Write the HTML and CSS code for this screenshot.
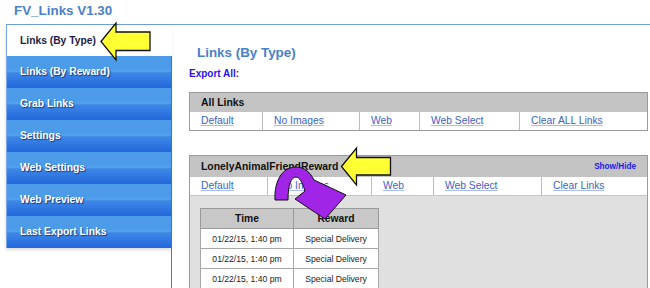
FILE: index.html
```html
<!DOCTYPE html>
<html lang="en">
<head>
    <meta charset="UTF-8">
    <meta name="viewport" content="width=device-width, initial-scale=1.0">
    <title>FV_Links V1.30</title>
    <link rel="stylesheet" href="styles.css">
</head>
<body>
    <div class="app-title">FV_Links V1.30</div>

    <div class="frame">
        <div class="side">
            <ul class="menu">
                <li class="active">Links (By Type)</li>
                <li>Links (By Reward)</li>
                <li>Grab Links</li>
                <li>Settings</li>
                <li>Web Settings</li>
                <li>Web Preview</li>
                <li>Last Export Links</li>
            </ul>
        </div>

        <div class="content">
            <h2>Links (By Type)</h2>
            <div class="export">Export All:</div>

            <div class="box">
                <div class="box-head">All Links</div>
                <div class="links all-cols">
                    <div class="cell"><a href="#">Default</a></div>
                    <div class="cell"><a href="#">No Images</a></div>
                    <div class="cell"><a href="#">Web</a></div>
                    <div class="cell"><a href="#">Web Select</a></div>
                    <div class="cell"><a href="#">Clear ALL Links</a></div>
                </div>
            </div>

            <div class="box reward-box">
                <div class="box-head">
                    <span>LonelyAnimalFriendReward</span>
                    <a href="#" class="toggle">Show/Hide</a>
                </div>
                <div class="links reward-cols">
                    <div class="cell"><a href="#">Default</a></div>
                    <div class="cell"><a href="#">No Images</a></div>
                    <div class="cell"><a href="#">Web</a></div>
                    <div class="cell"><a href="#">Web Select</a></div>
                    <div class="cell"><a href="#">Clear Links</a></div>
                </div>
                <div class="box-body">
                    <table class="log">
                        <thead>
                            <tr>
                                <th class="col-time">Time</th>
                                <th>Reward</th>
                            </tr>
                        </thead>
                        <tbody>
                            <tr><td>01/22/15, 1:40 pm</td><td>Special Delivery</td></tr>
                            <tr><td>01/22/15, 1:40 pm</td><td>Special Delivery</td></tr>
                            <tr><td>01/22/15, 1:40 pm</td><td>Special Delivery</td></tr>
                        </tbody>
                    </table>
                </div>
            </div>
        </div>
    </div>

    <!-- callout arrows drawn over the page -->
    <svg class="marks" width="650" height="288" viewBox="0 0 650 288">
        <polygon class="yellow" points="101,41.5 116,23 116,32 150,32 150,50.5 116,50.5 116,60"/>
        <polygon class="yellow" points="341.5,166.5 356.5,148 356.5,157.5 390.5,157.5 390.5,175 356.5,175 356.5,185"/>
        <path class="purple" d="M275,200 C274,180 283,167 296,167 C304,167 310,172 314,180 L346,195 L325,219 L295,199 L305,191 C302,181 299,177 296,177 C291,177 288,185 288,200 Z"/>
    </svg>
</body>
</html>
```

FILE: styles.css
```css
html, body {
    height: 288px;
    overflow: hidden;
}
body {
    margin: 0;
    font-family: "Liberation Sans", Arial, sans-serif;
    background: #fff;
    color: #111;
    position: relative;
}
.app-title {
    height: 24px;
    padding-left: 14px;
    font-size: 13.4px;
    font-weight: bold;
    line-height: 22px;
    color: #4a7fca;
}
.frame {
    display: flex;
    margin-left: 6px;
    border-top: 1px solid #6f9de7;
    min-height: 263px;
}
.side {
    width: 165px;
    flex-shrink: 0;
    border-right: 1px solid #3c7ae0;
}
.menu {
    list-style: none;
    margin: 0;
    padding: 0;
    border-left: 1px solid #7ba8ea;
    box-shadow: 0 2px 3px rgba(0, 0, 0, 0.15);
}
.menu li {
    height: 32px;
    line-height: 32px;
    padding-left: 13px;
    font-size: 10.3px;
    font-weight: bold;
    color: #fff;
    text-shadow: 1px 1px 1px #1a3c86;
    background: linear-gradient(#4d9ce9 0%, #4c9be9 44%, #5ba7ee 47%, #4a96e8 50%, #3c86e5 54%, #2567dd 100%);
}
.menu li.active {
    height: 31px;
    line-height: 31px;
    margin-right: -1px;
    background: #fff;
    color: #1c1c48;
    text-shadow: none;
}
.content {
    flex: 1;
    padding: 20px 2px 0 17px;
}
h2 {
    margin: 0 0 0 8px;
    font-size: 13.4px;
    line-height: 16px;
    color: #4a7fca;
}
.export {
    margin-top: 7px;
    font-size: 10px;
    font-weight: bold;
    line-height: 12px;
    color: #2b12ee;
}
.box {
    margin-top: 12px;
    border: 1px solid #9a9a9a;
}
.reward-box {
    margin-top: 24px;
}
.box-head {
    display: flex;
    justify-content: space-between;
    align-items: center;
    height: 19px;
    padding: 0 11px;
    background: #c3c3c3;
    font-size: 10.4px;
    font-weight: bold;
}
.reward-box .box-head {
    height: 21px;
}
.toggle {
    font-size: 8.2px;
    color: #1a1aee;
    text-decoration: none;
}
.links {
    display: grid;
    height: 18px;
    background: #fff;
}
.all-cols {
    grid-template-columns: 72px 97px 60px 100px 1fr;
}
.reward-cols {
    grid-template-columns: 77px 104px 62px 108px 1fr;
    border-bottom: 1px solid #c6c6c6;
}
.cell {
    padding-left: 11px;
    border-left: 1px solid #bdbdbd;
    font-size: 10.3px;
    line-height: 18px;
}
.cell:first-child {
    border-left: none;
}
.cell a {
    color: #3e5fc8;
    text-decoration-color: #a9bde9;
}
.box-body {
    background: #e0e0e0;
    padding: 12px 0 40px 10px;
}
.log {
    border-collapse: collapse;
    width: 179px;
    background: #fff;
    text-align: center;
    font-size: 8.6px;
    color: #222;
}
.log th {
    height: 19px;
    padding: 0;
    background: #c8c8c8;
    border: 1px solid #9a9a9a;
    font-size: 10.3px;
    color: #111;
}
.log .col-time {
    width: 92px;
}
.log td {
    height: 19px;
    padding: 0;
    border: 1px solid #a8a8a8;
}
.marks {
    position: absolute;
    top: 0;
    left: 0;
    pointer-events: none;
}
.yellow {
    fill: #ffff33;
    stroke: #111;
    stroke-width: 1.3;
    stroke-linejoin: miter;
}
.purple {
    fill: #a125e6;
    stroke: #111;
    stroke-width: 1;
}
```
